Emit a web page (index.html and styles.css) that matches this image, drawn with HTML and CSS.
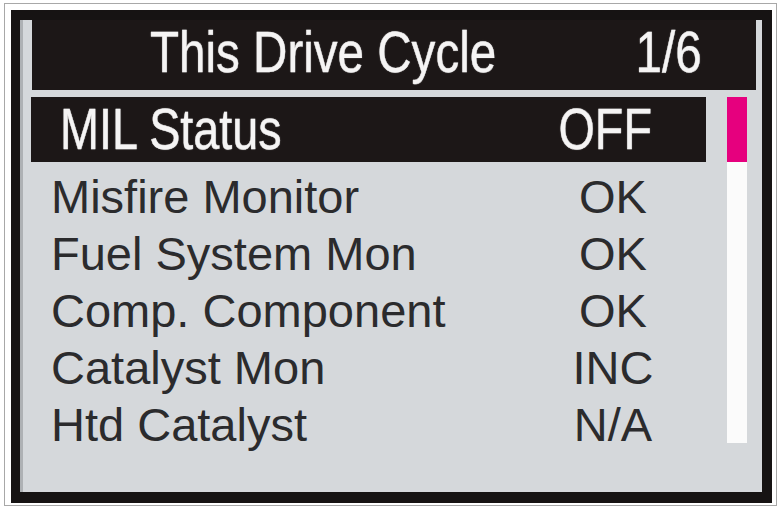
FILE: index.html
```html
<!DOCTYPE html>
<html>
<head>
<meta charset="utf-8">
<link rel="stylesheet" href="styles.css">
</head>
<body>
<div class="outer">
  <div class="frame">
    <div class="screen">
      <div class="header">
        <span class="narrow left">This Drive Cycle</span>
        <span class="narrow right">1/6</span>
      </div>
      <div class="body">
        <div class="main">
          <div class="selected">
            <span class="narrow left">MIL Status</span>
            <span class="narrow right">OFF</span>
          </div>
          <div class="list">
            <div class="row"><span class="label">Misfire Monitor</span><span class="value">OK</span></div>
            <div class="row"><span class="label">Fuel System Mon</span><span class="value">OK</span></div>
            <div class="row"><span class="label">Comp. Component</span><span class="value">OK</span></div>
            <div class="row"><span class="label">Catalyst Mon</span><span class="value">INC</span></div>
            <div class="row"><span class="label">Htd Catalyst</span><span class="value">N/A</span></div>
          </div>
        </div>
        <div class="scroll">
          <div class="thumb"></div>
          <div class="track"></div>
        </div>
      </div>
    </div>
  </div>
</div>
</body>
</html>
```
FILE: styles.css
```css
html, body {
  margin: 0;
  padding: 0;
  background: #ffffff;
}
body {
  font-family: "Liberation Sans", Arial, sans-serif;
}
.outer {
  width: fit-content;
  margin: 3px 0 0 4px;
  border: 1px solid #a8a8a8;
  padding: 6px 4px 2px 6px;
}
.frame {
  width: 742px;
  height: 472px;
  border-style: solid;
  border-color: #161313;
  border-width: 10px 10px 11px 9px;
  background: #d5d8db;
}
.screen {
  height: 100%;
  display: flex;
  flex-direction: column;
  box-shadow: inset 3px 0 0 #aeb1b4;
}
.narrow {
  display: inline-block;
  white-space: nowrap;
  transform: scaleX(0.82);
  color: #f5f4f4;
  -webkit-text-stroke: 0.4px #f5f4f4;
  text-shadow: 0 0 2px rgba(255,255,255,0.35);
}
.narrow.left { transform-origin: left center; }
.narrow.right { transform-origin: right center; }
.header {
  height: 70px;
  margin: 0 6px 0 12px;
  background: #1c1717;
  display: flex;
  justify-content: space-between;
  align-items: flex-start;
  font-size: 58px;
  line-height: 64px;
  padding: 0 54px 0 118px;
}
.body {
  display: flex;
  margin-top: 7px;
}
.main {
  width: 675px;
  margin-left: 11px;
}
.selected {
  height: 65px;
  background: #1c1717;
  display: flex;
  justify-content: space-between;
  font-size: 57px;
  line-height: 65px;
  padding: 0 54px 0 29px;
}
.list {
  margin-top: 6px;
  margin-left: -11px;
  padding-left: 31px;
  padding-right: 13px;
}
.row {
  display: grid;
  grid-template-columns: 1fr 160px;
  font-size: 47px;
  line-height: 57px;
  color: #2b2b2d;
}
.value {
  text-align: center;
}
.scroll {
  width: 20px;
  margin-left: 21px;
  display: flex;
  flex-direction: column;
}
.thumb {
  height: 65px;
  background: #e6007e;
}
.track {
  height: 281px;
  background: #fbfbfb;
}
```
